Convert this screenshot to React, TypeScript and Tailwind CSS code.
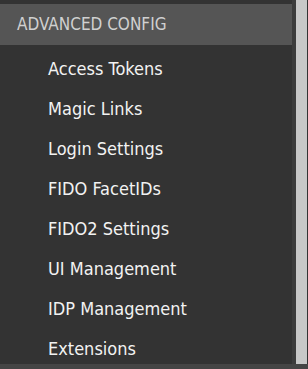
const items = [
  "Access Tokens",
  "Magic Links",
  "Login Settings",
  "FIDO FacetIDs",
  "FIDO2 Settings",
  "UI Management",
  "IDP Management",
  "Extensions",
];

export default function App() {
  return (
    <div
      className="flex h-[369px] w-[308px] flex-col overflow-hidden bg-[#333333]"
      style={{ fontFamily: '"DejaVu Sans Condensed", "DejaVu Sans", sans-serif' }}
    >
      <div className="flex flex-1 min-h-0">
        {/* Menu */}
        <div className="flex-1 pt-[4px]">
          <div className="flex h-[41px] items-center bg-[#555555] pl-[17px] text-[17px] text-[#d0d0d0]">
            ADVANCED CONFIG
          </div>
          <ul className="pt-[3px]">
            {items.map((item) => (
              <li
                key={item}
                className="flex h-[40px] items-center pl-[48px] text-[18px] text-[#f2f2f2]"
              >
                {item}
              </li>
            ))}
          </ul>
        </div>
        {/* Scrollbar */}
        <div className="w-[4px] bg-[#3c3c3c]" />
        <div className="w-[11px] bg-[#c8c8c8]" />
        <div className="w-[1px] bg-[#333333]" />
      </div>
      <div className="h-[5px] bg-[#454545]" />
    </div>
  );
}
